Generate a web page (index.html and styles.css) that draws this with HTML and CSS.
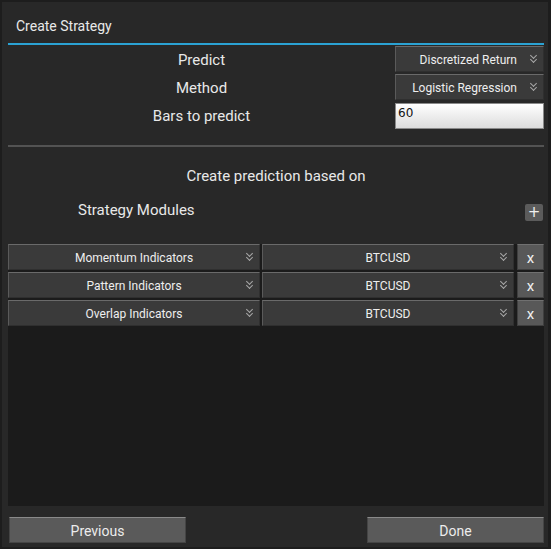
FILE: index.html
```html
<!DOCTYPE html>
<html lang="en">
  <head>
    <meta charset="utf-8">
    <title>Create Strategy</title>
    <link rel="stylesheet" href="styles.css">
  </head>
  <body>
    <div class="dialog">
      <div class="title">Create Strategy</div>

      <div class="params">
        <div class="lbl">Predict</div>
        <div class="select"><span>Discretized Return</span><i class="chev"></i></div>
        <div class="lbl">Method</div>
        <div class="select"><span>Logistic Regression</span><i class="chev"></i></div>
        <div class="lbl">Bars to predict</div>
        <input type="text" class="num" value="60">
      </div>

      <div class="sep"></div>

      <div class="based">Create prediction based on</div>
      <div class="modhead">
        <span class="modtitle">Strategy Modules</span>
        <button class="add">+</button>
      </div>

      <div class="modules">
        <div class="mod">
          <div class="select c"><span>Momentum Indicators</span><i class="chev"></i></div>
          <div class="select c"><span>BTCUSD</span><i class="chev"></i></div>
          <button class="del">x</button>
        </div>
        <div class="mod">
          <div class="select c"><span>Pattern Indicators</span><i class="chev"></i></div>
          <div class="select c"><span>BTCUSD</span><i class="chev"></i></div>
          <button class="del">x</button>
        </div>
        <div class="mod">
          <div class="select c"><span>Overlap Indicators</span><i class="chev"></i></div>
          <div class="select c"><span>BTCUSD</span><i class="chev"></i></div>
          <button class="del">x</button>
        </div>
      </div>

      <div class="footer">
        <button class="btn">Previous</button>
        <button class="btn">Done</button>
      </div>
    </div>
  </body>
</html>
```
FILE: styles.css
```css
body {
    margin: 0;
    background-color: #1d1d1d;
    font-family: Roboto, 'Noto Sans', sans-serif;
    color: #e8e8e8;
}
.dialog {
    margin: 2px;
    width: 546px;
    height: 545px;
    box-sizing: border-box;
    background-color: #282828;
    padding: 0 4px 0 6px;
    display: flex;
    flex-direction: column;
}
.title {
    height: 41px;
    line-height: 48px;
    padding-left: 8px;
    font-size: 14px;
    border-bottom: 2px solid #2ba2d3;
}
.params {
    display: grid;
    grid-template-columns: 1fr 149px;
    row-gap: 2px;
    margin-top: 1px;
}
.lbl {
    text-align: center;
    font-size: 15px;
    line-height: 28px;
    height: 26px;
}
.select {
    position: relative;
    height: 26px;
    box-sizing: border-box;
    background-color: #3a3a3a;
    border: 1px solid #2f2f2f;
    border-top-color: #6a6a6a;
    border-left-color: #5a5a5a;
    font-size: 12px;
    line-height: 26px;
    text-align: right;
    padding-right: 26px;
    color: #eeeeee;
}
.select.c {
    text-align: center;
    padding-right: 0;
}
/* double chevron at the right of every dropdown */
.chev {
    position: absolute;
    right: 6px;
    top: 8px;
    width: 7px;
    height: 8px;
}
.chev::before, .chev::after {
    content: "";
    position: absolute;
    left: 1px;
    width: 4px;
    height: 4px;
    border-right: 1.5px solid #a8a8a8;
    border-bottom: 1.5px solid #a8a8a8;
    transform: rotate(45deg);
}
.chev::before { top: -2px; }
.chev::after { top: 2px; }
.num {
    height: 26px;
    margin-top: 1px;
    box-sizing: border-box;
    border: 1px solid #8a8a8a;
    background: linear-gradient(#ffffff, #dcdcdc);
    font-family: 'DejaVu Sans', sans-serif;
    font-size: 12px;
    padding: 0 0 6px 2px;
    color: #111;
    outline: none;
}
.sep {
    margin-top: 16px;
    height: 2px;
    background-color: #535353;
}
.based {
    text-align: center;
    font-size: 15px;
    margin-top: 19px;
    line-height: 20px;
}
.modhead {
    display: flex;
    justify-content: space-between;
    align-items: flex-start;
    margin-top: 12px;
    height: 24px;
}
.modtitle {
    font-size: 15px;
    line-height: 24px;
    margin-left: 70px;
}
.add {
    width: 18px;
    height: 17px;
    padding: 0;
    margin-right: 1px;
    margin-top: 6px;
    border: none;
    border-radius: 2px;
    background-color: #5b5b5b;
    color: #f0f0f0;
    font-size: 15px;
    line-height: 15px;
    font-family: 'DejaVu Sans', sans-serif;
}
.modules {
    flex: 1;
    margin-top: 22px;
    background-color: #1b1b1b;
}
.mod {
    display: flex;
    gap: 2px;
    margin-bottom: 2px;
}
.mod .select {
    flex: 1;
}
.del {
    width: 27px;
    height: 26px;
    margin-left: 1px;
    padding: 2px 0 0 0;
    border: 1px solid #3f3f3f;
    border-top-color: #707070;
    background-color: #585858;
    color: #f0f0f0;
    font-family: Roboto, sans-serif;
    font-size: 15px;
    line-height: 20px;
}
.footer {
    display: flex;
    justify-content: space-between;
    padding: 11px 0 4px 1px;
}
.btn {
    width: 177px;
    height: 26px;
    padding: 2px 0 0 0;
    border: 1px solid #454545;
    border-top-color: #8a8a8a;
    background-color: #5a5a5a;
    color: #ececec;
    font-family: Roboto, sans-serif;
    font-size: 14px;
}
```
